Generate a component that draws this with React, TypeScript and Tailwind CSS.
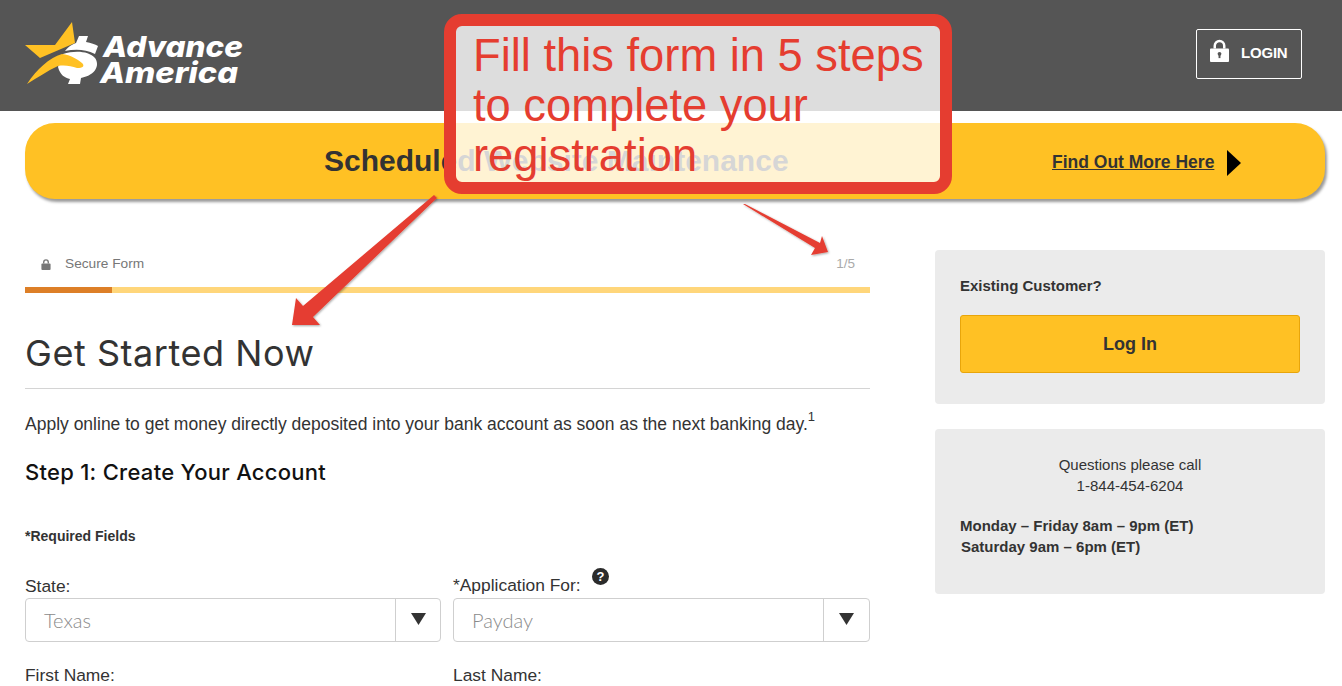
import React from "react";

const sans = "font-['Liberation_Sans',Arial,sans-serif]";

function Logo() {
  return (
    <svg width="222" height="70" viewBox="0 0 222 70" className="block">
      <polygon points="0,24 30,24 47,1 50,22 15,37" fill="#ffc124" />
      <path d="M40,30 C44,25 48,23 51,22 L54,15 L63,15 L61,21 C66,22 70,23 73,25 L70,33 C60,28 50,28 40,30 Z" fill="#ffffff" />
      <path d="M38,33 C50,29 64,30 70,37 C75,44 71,54 56,57 L55,63 L43,63 L45,58 C40,57 35,54 33,46 Z" fill="#ffffff" />
      <path d="M2,63 C12,48 24,37 37,33 C46,34 52,38 57,42 C60,45 58,47 52,47 C46,45 40,44 33,45 C22,50 12,57 2,63 Z" fill="#ffc124" />
      <text x="78" y="36" fill="#fff" fontFamily="Inter, sans-serif" fontWeight="800" fontStyle="italic" fontSize="29" textLength="140" lengthAdjust="spacingAndGlyphs">Advance</text>
      <text x="75" y="62" fill="#fff" fontFamily="Inter, sans-serif" fontWeight="800" fontStyle="italic" fontSize="29" textLength="138" lengthAdjust="spacingAndGlyphs">America</text>
    </svg>
  );
}

function Lock({ className, fill }: { className: string; fill: string }) {
  return (
    <svg viewBox="0 0 20 24" className={className}>
      <path d="M5 10V7a5 5 0 0 1 10 0v3" fill="none" stroke={fill} strokeWidth="2.6" />
      <rect x="0" y="10" width="20" height="14" rx="1" fill={fill} />
      <circle cx="10" cy="15.5" r="2" fill="#555555" />
      <rect x="9" y="16" width="2" height="4" fill="#555555" />
    </svg>
  );
}

function Select({ value, arrowBox }: { value: string; arrowBox: string }) {
  return (
    <div className="flex h-[44px] border border-[#cfcfcf] rounded-[4px] bg-white">
      <div className="flex-1 flex items-center pl-[18px] text-[20px] font-light text-[#8a8a8a] font-['Lato',sans-serif]">{value}</div>
      <div className={`${arrowBox} border-l border-[#cfcfcf] flex items-center justify-center`}>
        <svg width="15" height="12" viewBox="0 0 15 12" className="-mt-[3px]"><polygon points="0,0 15,0 7.5,12" fill="#333" /></svg>
      </div>
    </div>
  );
}

export default function App() {
  return (
    <div className={`relative h-[686px] overflow-hidden bg-white text-[#333] ${sans}`}>
      <header className="h-[111px] bg-[#555555] flex items-center justify-between pl-[25px] pr-[40px]">
        <Logo />
        <div className="w-[106px] h-[50px] border border-white rounded-[2px] flex items-center pl-[13px] gap-[12px] -mt-[3px]">
          <Lock className="w-[19px] h-[23px] -mt-[7px]" fill="#ffffff" />
          <span className="text-white font-bold text-[15px] tracking-[-0.2px] -mt-px">LOGIN</span>
        </div>
      </header>

      <div className="ml-[25px] mr-[17px] mt-[12px] h-[76px] rounded-[30px] bg-[#ffc124] shadow-[2px_3px_3px_rgba(0,0,0,0.4)] flex items-center pl-[299px]">
        <span className="text-[30px] font-bold w-[728px] whitespace-nowrap -mt-px">Scheduled Website Maintenance</span>
        <span className="text-[17.5px] font-bold underline mt-[2px]">Find Out More Here</span>
        <svg width="14" height="26" viewBox="0 0 14 26" className="ml-[13px] mt-[4px]"><polygon points="0,0 14,13 0,26" fill="#000" /></svg>
      </div>

      <main className="flex justify-between pl-[25px] pr-[17px] mt-[51px]">
        <div className="w-[845px]">
          <div className="h-[37px] flex items-center justify-between pl-[16px] pr-[15px] text-[13.7px] text-[#777]">
            <div className="flex items-center gap-[14px] -mt-[8px]">
              <svg viewBox="0 0 20 24" className="w-[10px] h-[11px]"><path d="M5 10V7a5 5 0 0 1 10 0v3" fill="none" stroke="#777" strokeWidth="3" /><rect y="10" width="20" height="14" rx="2" fill="#777" /></svg>
              <span>Secure Form</span>
            </div>
            <span className="-mt-[8px] text-[#aaa] text-[13.5px]">1/5</span>
          </div>
          <div className="h-[6px] bg-[#ffd67a]"><div className="h-full w-[87px] bg-[#dd7f27]" /></div>
          <h1 className="mt-[38px] text-[36px] leading-[44px] font-normal font-['Inter',sans-serif] text-[#333] tracking-[0.55px] pb-[13px] border-b border-[#d4d4d4]">Get Started Now</h1>
          <p className="mt-[23px] text-[17.5px] leading-[24px] text-[#333] whitespace-nowrap">
            Apply online to get money directly deposited into your bank account as soon as the next banking day.<sup className="text-[13px] align-[3px] leading-none">1</sup>
          </p>
          <h2 className="mt-[22px] text-[22px] leading-[28px] font-medium text-[#111] font-['Inter',sans-serif] tracking-[0.27px]">Step 1: Create Your Account</h2>
          <p className="mt-[42px] text-[14px] leading-[16px] font-bold">*Required Fields</p>
          <div className="grid grid-cols-[416px_417px] gap-x-[12px] mt-[29px]">
            <div>
              <div className="h-[25px] text-[17.4px] leading-[26px]">State:</div>
              <Select value="Texas" arrowBox="w-[45px]" />
              <div className="mt-[21px] text-[17.4px] leading-[24px]">First Name:</div>
            </div>
            <div>
              <div className="h-[25px] text-[17.4px] leading-[24px] flex">
                <span>*Application For:</span>
                <svg width="17" height="17" viewBox="0 0 17 17" className="ml-[11px] -mt-[5px]">
                  <circle cx="8.5" cy="8.5" r="8.5" fill="#2b2b2b" />
                  <text x="8.5" y="13" textAnchor="middle" fill="#fff" fontSize="13" fontWeight="700" fontFamily="Liberation Sans, sans-serif">?</text>
                </svg>
              </div>
              <Select value="Payday" arrowBox="w-[46px]" />
              <div className="mt-[21px] text-[17.4px] leading-[24px]">Last Name:</div>
            </div>
          </div>
        </div>

        <aside className="w-[390px]">
          <div className="h-[154px] bg-[#ebebeb] rounded-[4px] px-[25px] pt-[27px]">
            <div className="text-[15px] font-bold leading-[18px]">Existing Customer?</div>
            <div className="mt-[20px] h-[58px] bg-[#ffc124] border border-[#e8a50a] rounded-[3px] flex items-center justify-center text-[18px] font-bold">Log In</div>
          </div>
          <div className="mt-[25px] h-[165px] bg-[#ebebeb] rounded-[4px] px-[25px] pt-[25px] text-[15px] leading-[21px]">
            <div className="text-center">Questions please call</div>
            <div className="text-center">1-844-454-6204</div>
            <div className="mt-[19px] font-bold">Monday – Friday 8am – 9pm (ET)</div>
            <div className="font-bold pl-px">Saturday 9am – 6pm (ET)</div>
          </div>
        </aside>
      </main>

      <div className="absolute left-[444px] top-[14px] w-[508px] h-[180px] border-[12px] border-[#e53d30] rounded-[18px] bg-[rgba(255,255,255,0.8)] pl-[17px] pt-[5px] text-[45.3px] leading-[50px] text-[#e53d30]">
        Fill this form in 5 steps to complete your registration
      </div>
      <svg className="absolute left-0 top-0 pointer-events-none" width="1342" height="686" viewBox="0 0 1342 686">
        <defs>
          <filter id="s" x="-20%" y="-20%" width="140%" height="140%">
            <feDropShadow dx="1" dy="1" stdDeviation="1" floodColor="#000" floodOpacity="0.35" />
          </filter>
        </defs>
        <g filter="url(#s)" fill="#e53d30">
          <polygon points="434,195 437,198 313,317 320,325 292,325 296,298 303,306" />
          <polygon points="743,204 745,204 820,243 822,236 828,252 811,255 815,248" />
        </g>
      </svg>
    </div>
  );
}
